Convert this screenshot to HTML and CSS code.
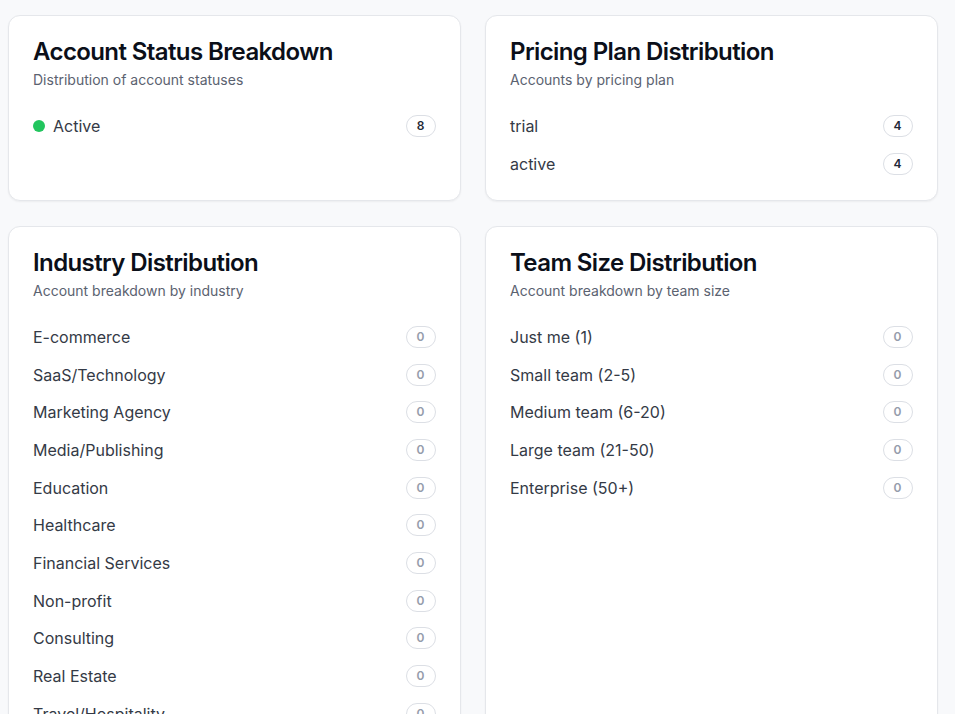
FILE: index.html
```html
<!DOCTYPE html>
<html lang="en">
<head>
<meta charset="utf-8">
<title>Account Analytics</title>
<link rel="stylesheet" href="styles.css">
</head>
<body>
<main class="grid">
  <section class="card">
    <header class="card-header">
      <h2 class="card-title">Account Status Breakdown</h2>
      <p class="card-desc">Distribution of account statuses</p>
    </header>
    <ul class="list">
      <li class="row"><span class="label"><span class="dot"></span>Active</span><span class="badge strong">8</span></li>
    </ul>
  </section>
  <section class="card">
    <header class="card-header">
      <h2 class="card-title">Pricing Plan Distribution</h2>
      <p class="card-desc">Accounts by pricing plan</p>
    </header>
    <ul class="list">
      <li class="row"><span class="label">trial</span><span class="badge strong">4</span></li>
      <li class="row"><span class="label">active</span><span class="badge strong">4</span></li>
    </ul>
  </section>
  <section class="card">
    <header class="card-header">
      <h2 class="card-title">Industry Distribution</h2>
      <p class="card-desc">Account breakdown by industry</p>
    </header>
    <ul class="list">
      <li class="row"><span class="label">E-commerce</span><span class="badge muted">0</span></li>
      <li class="row"><span class="label">SaaS/Technology</span><span class="badge muted">0</span></li>
      <li class="row"><span class="label">Marketing Agency</span><span class="badge muted">0</span></li>
      <li class="row"><span class="label">Media/Publishing</span><span class="badge muted">0</span></li>
      <li class="row"><span class="label">Education</span><span class="badge muted">0</span></li>
      <li class="row"><span class="label">Healthcare</span><span class="badge muted">0</span></li>
      <li class="row"><span class="label">Financial Services</span><span class="badge muted">0</span></li>
      <li class="row"><span class="label">Non-profit</span><span class="badge muted">0</span></li>
      <li class="row"><span class="label">Consulting</span><span class="badge muted">0</span></li>
      <li class="row"><span class="label">Real Estate</span><span class="badge muted">0</span></li>
      <li class="row"><span class="label">Travel/Hospitality</span><span class="badge muted">0</span></li>
      <li class="row"><span class="label">Other</span><span class="badge muted">0</span></li>
    </ul>
  </section>
  <section class="card">
    <header class="card-header">
      <h2 class="card-title">Team Size Distribution</h2>
      <p class="card-desc">Account breakdown by team size</p>
    </header>
    <ul class="list">
      <li class="row"><span class="label">Just me (1)</span><span class="badge muted">0</span></li>
      <li class="row"><span class="label">Small team (2-5)</span><span class="badge muted">0</span></li>
      <li class="row"><span class="label">Medium team (6-20)</span><span class="badge muted">0</span></li>
      <li class="row"><span class="label">Large team (21-50)</span><span class="badge muted">0</span></li>
      <li class="row"><span class="label">Enterprise (50+)</span><span class="badge muted">0</span></li>
    </ul>
  </section>
</main>
</body>
</html>
```

FILE: styles.css
```css
* { box-sizing: border-box; }
html, body {
  margin: 0;
  padding: 0;
  background: #f8f9fb;
  font-family: Inter, "Noto Sans", sans-serif;
  color: #111827;
}
.grid {
  display: grid;
  grid-template-columns: 452.5px 452.5px;
  column-gap: 24.5px;
  row-gap: 25px;
  padding: 15px 0 0 8px;
}
.card {
  background: #ffffff;
  border: 1px solid #e5e7eb;
  border-radius: 12px;
  box-shadow: 0 1px 2px rgba(0, 0, 0, 0.05);
  padding: 24px 24px 25.5px;
}
.card-header {
  display: flex;
  flex-direction: column;
  gap: 6px;
  margin-bottom: 25px;
}
.card-title {
  margin: 0;
  font-size: 24px;
  line-height: 24px;
  font-weight: 600;
  letter-spacing: -0.6px;
  color: #0b0f19;
}
.card-desc {
  margin: 0;
  font-size: 14px;
  line-height: 20px;
  color: #5b6270;
}
.list {
  list-style: none;
  margin: 0;
  padding: 0;
  display: flex;
  flex-direction: column;
  gap: 15.67px;
}
.row {
  display: flex;
  align-items: center;
  justify-content: space-between;
  height: 22px;
}
.label {
  display: flex;
  align-items: center;
  gap: 8px;
  font-size: 16px;
  line-height: 24px;
  color: #343a46;
}
.dot {
  width: 12px;
  height: 12px;
  border-radius: 50%;
  background: #22c55e;
}
.badge {
  display: inline-flex;
  align-items: center;
  justify-content: center;
  min-width: 30px;
  height: 22px;
  padding: 0 10px;
  border: 1px solid #dcdfe5;
  border-radius: 999px;
  font-size: 12px;
  font-weight: 600;
  line-height: 16px;
}
.badge.strong { color: #1f2937; }
.badge.muted { color: #959cab; }
```
